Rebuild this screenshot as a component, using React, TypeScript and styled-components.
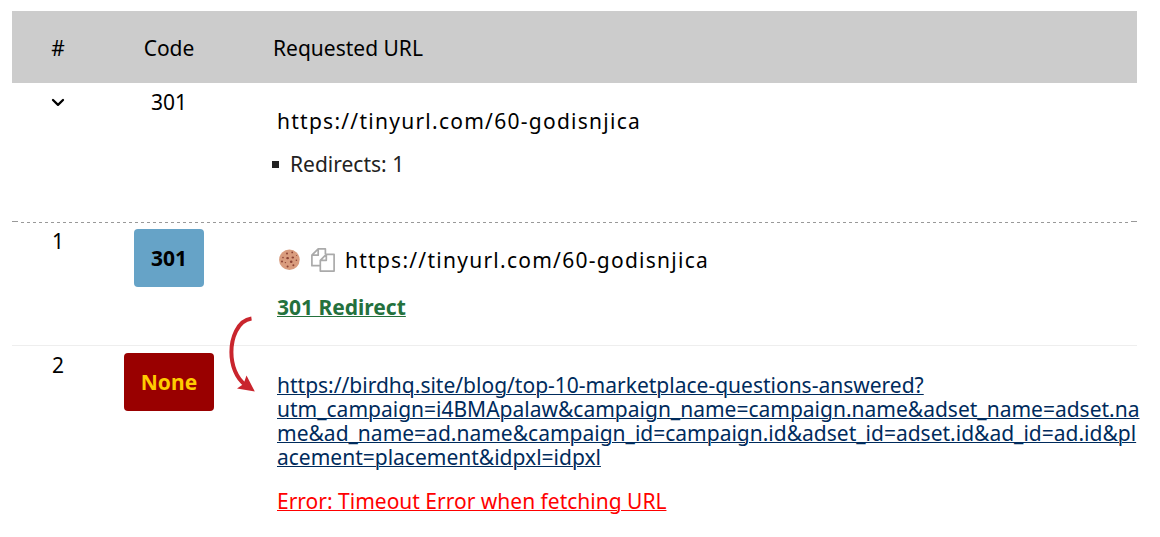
import React from "react";
import styled, { createGlobalStyle } from "styled-components";

const GlobalStyle = createGlobalStyle`
  body {
    margin: 0;
    background: #fff;
    color: #000;
    font: 21px/24px "Noto Sans", sans-serif;
  }
`;

const Page = styled.main`
  padding: 11px 23px 11px 12px;
`;

const Table = styled.table`
  width: 100%;
  table-layout: fixed;
  border-collapse: separate;
  border-spacing: 0;
`;

const Column = styled.col<{ $width?: number }>`
  width: ${({ $width }) => ($width ? `${$width}px` : "auto")};
`;

const HeadCell = styled.th<{ $start?: boolean }>`
  padding: ${({ $start }) => ($start ? "25px 0 23px 39px" : "25px 0 23px")};
  background: #ccc;
  font-weight: 400;
  text-align: ${({ $start }) => ($start ? "left" : "center")};
`;

const Row = styled.tr<{ $rule?: "dashed" | "light" }>`
  background: ${({ $rule }) =>
    $rule === "dashed"
      ? `linear-gradient(#999, #999) 0 0 / 6px 1px no-repeat,
         linear-gradient(#999, #999) 100% 0 / 6px 1px no-repeat,
         linear-gradient(#fff, #fff) 0 1px / 9px 1px no-repeat,
         linear-gradient(#fff, #fff) 100% 1px / 9px 1px no-repeat,
         linear-gradient(90deg, #999 50%, transparent 50%) 9px 1px / 6px 1px repeat-x`
      : $rule === "light"
        ? "linear-gradient(#eee, #eee) 0 0 / 100% 1px no-repeat"
        : "none"};

  > td {
    border-top: ${({ $rule }) => ($rule ? "1px solid transparent" : "0")};
  }
`;

const Cell = styled.td`
  padding: 7px 0 0;
  text-align: center;
  vertical-align: top;
`;

const UrlCell = styled.td`
  position: relative;
  padding: 27px 0 26px 43px;
  vertical-align: top;
`;

const UrlLine = styled.div`
  display: flex;
  align-items: center;
  margin-top: -1px;
`;

const Url = styled.span`
  letter-spacing: 0.06em;
`;

const IconButton = styled.button`
  display: flex;
  padding: 0;
  margin-right: 10px;
  border: 0;
  background: none;
  cursor: pointer;
`;

const Toggle = styled.button`
  display: inline-flex;
  align-items: center;
  height: 24px;
  padding: 0;
  border: 0;
  background: none;
  vertical-align: top;
  cursor: pointer;
`;

const Facts = styled.ul`
  margin: 19px 0;
  padding: 0;
  list-style: none;
  color: #222;
`;

const Fact = styled.li`
  display: flex;
  align-items: center;
  gap: 11px;
  margin-left: -5px;

  &::before {
    content: "";
    width: 7px;
    height: 7px;
    background: #222;
  }
`;

const Badge = styled.span<{ $tone: "redirect" | "failed" }>`
  display: inline-block;
  padding: 17px;
  border-radius: 4px;
  font-weight: 700;
  color: ${({ $tone }) => ($tone === "failed" ? "#ffcc00" : "#000")};
  background: ${({ $tone }) => ($tone === "failed" ? "#990000" : "#66a3c7")};
`;

const Target = styled.a`
  display: block;
  margin-right: -8px;
  color: #002b5c;
  overflow-wrap: anywhere;
  text-decoration-thickness: 1px;
`;

const Note = styled.div<{ $gap: number }>`
  margin-top: ${({ $gap }) => $gap}px;
`;

const NoteLink = styled.a<{ $error?: boolean }>`
  color: ${({ $error }) => ($error ? "#f00" : "#24713d")};
  font-weight: ${({ $error }) => ($error ? 400 : 700)};
  text-decoration-thickness: 1px;
`;

const Arrow = styled.svg`
  position: absolute;
  top: 92px;
  left: -6px;
`;

const Chevron = () => (
  <svg width="14" height="10" viewBox="0 0 14 10" fill="none" aria-hidden="true">
    <path d="M2 3 7 7.8l5-4.8" stroke="#000" strokeWidth="2.3" strokeLinecap="round" strokeLinejoin="round" />
  </svg>
);

const Cookie = () => (
  <svg width="24" height="24" viewBox="-1 -1 24 24" aria-hidden="true">
    <circle cx="11.4" cy="10.8" r="10.3" fill="#d99c7e" />
    <g fill="#8b4234">
      <circle cx="9" cy="4.6" r="1" />
      <circle cx="14.2" cy="3.4" r=".9" />
      <circle cx="5" cy="8.6" r=".8" />
      <ellipse cx="9.6" cy="9.2" rx="1.4" ry="1.1" />
      <ellipse cx="14.8" cy="8.4" rx="1.3" ry="1" />
      <circle cx="4" cy="12.4" r="1" />
      <circle cx="7.4" cy="13.6" r=".7" />
      <circle cx="13.2" cy="12.8" r="1.3" />
      <circle cx="18.4" cy="11.2" r=".8" />
      <circle cx="9.6" cy="17.6" r="1" />
      <circle cx="15.4" cy="16.2" r="1" />
      <circle cx="18.6" cy="6.6" r=".5" />
    </g>
  </svg>
);

const Copy = () => (
  <svg width="24" height="24" viewBox="0 0 24 24" fill="none" stroke="#aaa" strokeWidth="1.7" strokeLinejoin="round" aria-hidden="true">
    <path d="M9 17.7H.9V7.2L7.2.9h7.2v5.4M7.2.9v6.3H.9" />
    <path d="M15.3 6.3h7.8v16.8H9.3V12.3zM15.3 6.3v6h-6" />
  </svg>
);

const RedirectArrow = () => (
  <Arrow width="30" height="80" viewBox="0 0 30 80" aria-hidden="true">
    <path d="M23.5 4.5C9 6.5 3.4 25 3.4 38S8 64 17.5 71" fill="none" stroke="#c9252d" strokeWidth="4" />
    <path d="M18.5 61.5 26.8 77.5 9 74.5l6.500-4.500z" fill="#c9252d" />
  </Arrow>
);

export default function App() {
  return (
    <Page>
      <GlobalStyle />
      <Table>
        <colgroup>
          <Column $width={92} />
          <Column $width={130} />
          <Column />
        </colgroup>
        <thead>
          <tr>
            <HeadCell scope="col">#</HeadCell>
            <HeadCell scope="col">Code</HeadCell>
            <HeadCell scope="col" $start>
              Requested URL
            </HeadCell>
          </tr>
        </thead>
        <tbody>
          <Row>
            <Cell>
              <Toggle aria-label="Toggle redirects" aria-expanded="true">
                <Chevron />
              </Toggle>
            </Cell>
            <Cell>301</Cell>
            <UrlCell>
              <UrlLine>
                <Url>https://tinyurl.com/60-godisnjica</Url>
              </UrlLine>
              <Facts>
                <Fact>Redirects: 1</Fact>
              </Facts>
            </UrlCell>
          </Row>
          <Row $rule="dashed">
            <Cell>1</Cell>
            <Cell>
              <Badge $tone="redirect">301</Badge>
            </Cell>
            <UrlCell>
              <UrlLine>
                <IconButton aria-label="Show cookies">
                  <Cookie />
                </IconButton>
                <IconButton aria-label="Copy URL">
                  <Copy />
                </IconButton>
                <Url>https://tinyurl.com/60-godisnjica</Url>
              </UrlLine>
              <Note $gap={23}>
                <NoteLink href="#redirect">301 Redirect</NoteLink>
              </Note>
              <RedirectArrow />
            </UrlCell>
          </Row>
          <Row $rule="light">
            <Cell>2</Cell>
            <Cell>
              <Badge $tone="failed">None</Badge>
            </Cell>
            <UrlCell>
              <Target href="#target">
                https://birdhq.site/blog/top-10-marketplace-questions-answered?utm_campaign=i4BMApalaw&amp;campaign_name=campaign.name&amp;adset_name=adset.name&amp;ad_name=ad.name&amp;campaign_id=campaign.id&amp;adset_id=adset.id&amp;ad_id=ad.id&amp;placement=placement&amp;idpxl=idpxl
              </Target>
              <Note $gap={20}>
                <NoteLink href="#error" $error>
                  Error: Timeout Error when fetching URL
                </NoteLink>
              </Note>
            </UrlCell>
          </Row>
        </tbody>
      </Table>
    </Page>
  );
}
